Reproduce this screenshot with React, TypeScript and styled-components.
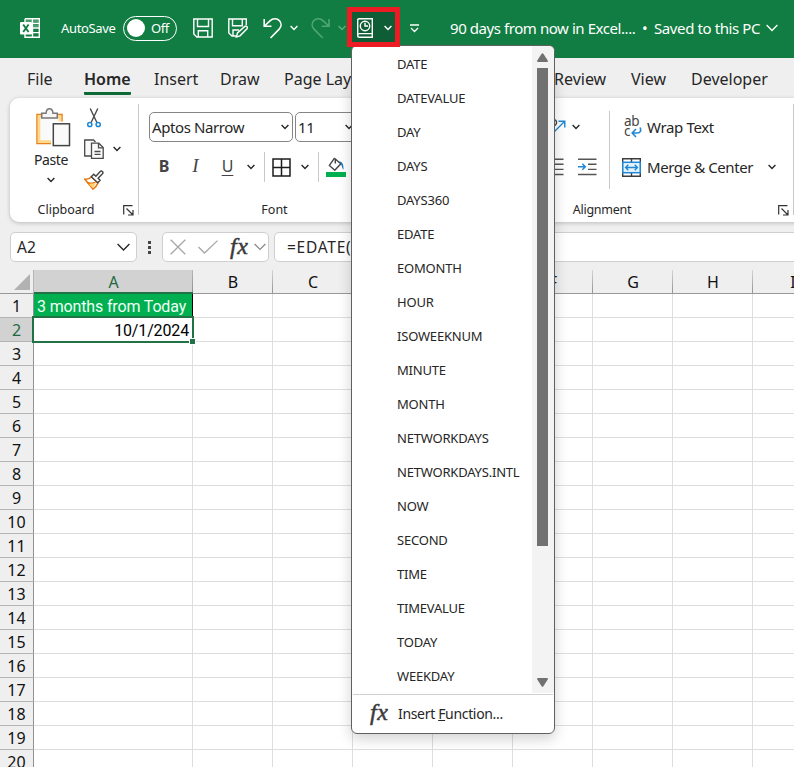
import React from 'react';
import styled, { createGlobalStyle } from 'styled-components';

const GlobalStyle = createGlobalStyle`
  *, *::before, *::after { box-sizing: border-box; }
  body { margin: 0; overflow: hidden; }
  svg { display: block; flex: none; }
`;

const Window = styled.div`
  position: relative;
  width: 794px;
  height: 767px;
  overflow: hidden;
  background: #efefef;
  color: #262626;
  font-family: 'Noto Sans', 'Open Sans', sans-serif;
`;

const Text = styled.span<{ $size?: number; $track?: number }>`
  font-size: ${(p) => p.$size ?? 15}px;
  letter-spacing: ${(p) => p.$track ?? 0}px;
  line-height: 20px;
  white-space: nowrap;
`;

/* Title bar */
const TitleBar = styled.header`
  display: grid;
  grid-template-columns: 41px 62px 70px 35px 35px 26px 22px 26px 10px 53px 50px 192px 12px 112px 14px;
  align-items: center;
  height: 58px;
  padding: 0 0 2px 20px;
  background: #117d42;
  color: #fff;
`;

const Toggle = styled.div`
  display: flex;
  align-items: center;
  gap: 6px;
  width: 54px;
  height: 25px;
  padding-left: 3px;
  border: 1px solid #fff;
  border-radius: 13px;
`;

const Knob = styled.span`
  width: 18px;
  height: 18px;
  border-radius: 50%;
  background: #fff;
`;

const HighlightedButton = styled.div`
  position: relative;
  z-index: 5;
  display: flex;
  align-items: center;
  gap: 11px;
  width: 53px;
  height: 40px;
  margin-bottom: 2px;
  padding: 2px 0 0 5px;
  border: 5px solid #ed1c24;
  background: #0f5d34;
`;

const Slot = styled.div<{ $left?: number }>`
  padding-left: ${(p) => p.$left ?? 0}px;
`;

/* Ribbon */
const Tabs = styled.nav`
  display: grid;
  grid-template-columns: 57px 70px 66px 64px 270px 77px 60px auto;
  height: 40px;
  padding-left: 27px;
`;

const Tab = styled.div<{ $active?: boolean }>`
  width: max-content;
  height: 37px;
  padding-top: 11px;
  font-size: 16px;
  line-height: 20px;
  white-space: nowrap;
  font-weight: ${(p) => (p.$active ? 600 : 400)};
  border-bottom: 3px solid ${(p) => (p.$active ? '#0e6b38' : 'transparent')};
  border-radius: 1px;
`;

const Ribbon = styled.section`
  display: flex;
  width: 800px;
  height: 124px;
  margin-left: 10px;
  border-radius: 9px;
  background: #fff;
  box-shadow: 0 1px 4px rgba(0, 0, 0, 0.22);
`;

const Group = styled.div<{ $width: number }>`
  display: flex;
  flex-direction: column;
  flex: none;
  width: ${(p) => p.$width}px;
`;

const GroupBody = styled.div`
  display: flex;
  height: 102px;
`;

const GroupLabel = styled.div<{ $shift?: number }>`
  display: grid;
  grid-template-columns: calc(50% - 30px - ${(p) => p.$shift ?? 0}px) 60px 1fr;
  justify-items: center;
  height: 20px;
`;

const Launcher = styled.div`
  justify-self: end;
  padding: 5px 4px 0 0;
`;

const GroupDivider = styled.div`
  width: 1px;
  height: 111px;
  margin-top: 6px;
  background: #c8c8c8;
`;

const PasteButton = styled.div`
  display: flex;
  flex-direction: column;
  align-items: center;
  width: 70px;
  padding: 9px 0 0 12px;
`;

const PasteCaption = styled.div`
  height: 24px;
  margin: 1px 0 5px;
`;

const PasteGlyph = styled.div`
  padding-left: 3px;
`;

const IconColumn = styled.div`
  display: flex;
  flex-direction: column;
  gap: 11px;
  padding: 10px 0 0 4px;
`;

const IconRow = styled.div`
  display: flex;
  align-items: center;
  gap: 9px;
  height: 20px;
`;

const ToolRows = styled.div<{ $left?: number; $width?: number }>`
  display: flex;
  flex-direction: column;
  gap: 10px;
  width: ${(p) => (p.$width ? `${p.$width}px` : 'auto')};
  padding: 14px 0 0 ${(p) => p.$left ?? 0}px;
`;

const ToolRow = styled.div<{ $gap?: number }>`
  display: flex;
  align-items: center;
  gap: ${(p) => p.$gap ?? 0}px;
  height: 30px;
`;

const Combo = styled.div<{ $width: number }>`
  display: flex;
  align-items: center;
  justify-content: space-between;
  width: ${(p) => p.$width}px;
  height: 30px;
  padding: 0 3px 0 2px;
  border: 1px solid #858585;
  border-radius: 5px;
  background: #fff;
`;

const FormatRow = styled.div`
  display: grid;
  grid-template-columns: 30px 33px 31px 16px 11px 23px 24px 3px 32px;
  align-items: center;
  justify-items: center;
  height: 30px;
`;

const Letter = styled.span<{ $kind: 'bold' | 'italic' | 'underline' }>`
  padding-bottom: 2px;
  font-family: ${(p) => (p.$kind === 'italic' ? "'Liberation Serif', serif" : "'Noto Sans', sans-serif")};
  font-size: ${(p) => (p.$kind === 'italic' ? 19 : 16)}px;
  line-height: 20px;
  color: #444;
  font-weight: ${(p) => (p.$kind === 'bold' ? 700 : 400)};
  font-style: ${(p) => (p.$kind === 'italic' ? 'italic' : 'normal')};
  text-decoration: ${(p) => (p.$kind === 'underline' ? 'underline' : 'none')};
  text-underline-offset: 3px;
`;

const Rule = styled.span<{ $height: number; $top?: number }>`
  width: 1px;
  height: ${(p) => p.$height}px;
  margin-top: ${(p) => p.$top ?? 0}px;
  background: #c8c8c8;
`;

/* Formula bar */
const FormulaBar = styled.section`
  display: flex;
  height: 48px;
  padding: 10px 0 8px 10px;
`;

const Field = styled.div<{ $width: number; $left?: number }>`
  display: flex;
  flex: none;
  align-items: center;
  width: ${(p) => p.$width}px;
  height: 30px;
  padding-left: ${(p) => p.$left ?? 6}px;
  border: 1px solid #cfcfcf;
  border-radius: 5px;
  background: #fff;
`;

const NameField = styled(Field)`
  justify-content: space-between;
  padding-right: 6px;
`;

const Dots = styled.div`
  display: flex;
  flex: none;
  flex-direction: column;
  align-items: center;
  gap: 2px;
  width: 25px;
  padding-top: 9px;
`;

const Dot = styled.span`
  width: 3px;
  height: 3px;
  background: #444;
`;

const Fx = styled.span<{ $left?: number }>`
  display: inline-block;
  width: 19px;
  margin-left: ${(p) => p.$left ?? 0}px;
  padding-bottom: 3px;
  color: #3b3b3b;
  font: italic 400 24px/22px 'Liberation Serif', serif;
  letter-spacing: 0.5px;
  -webkit-text-stroke: 0.5px #3b3b3b;
`;

/* Sheet */
const Sheet = styled.main`
  width: 833px;
  background: #fff;
`;

const SheetRow = styled.div<{ $head?: boolean }>`
  display: grid;
  grid-template-columns: 34px 159px repeat(8, 80px);
  height: 24px;
  background: ${(p) => (p.$head ? '#efefef' : '#fff')};
`;

const ColumnHead = styled.div<{ $selected?: boolean }>`
  display: flex;
  align-items: center;
  justify-content: center;
  padding-top: ${(p) => (p.$selected ? 2 : 1)}px;
  font-size: 16px;
  line-height: 20px;
  color: ${(p) => (p.$selected ? '#1d6a41' : '#111')};
  background: ${(p) =>
    p.$selected
      ? 'linear-gradient(#b8b8b8, #8f8f8f) right / 1px 100% no-repeat, #d2d2d2'
      : 'linear-gradient(#d4d4d4, #939393) right / 1px 100% no-repeat'};
  border-bottom: ${(p) => (p.$selected ? '2px solid #217346' : '1px solid #999')};
`;

const Corner = styled.div`
  display: flex;
  justify-content: flex-end;
  padding: 4px 3px 0 0;
  border-right: 1px solid #b5b5b5;
  border-bottom: 1px solid #999;
`;

const RowHead = styled.div<{ $selected?: boolean }>`
  display: flex;
  align-items: center;
  justify-content: center;
  font-size: 16px;
  line-height: 20px;
  color: ${(p) => (p.$selected ? '#1d6a41' : '#111')};
  background: ${(p) => (p.$selected ? '#d2d2d2' : '#efefef')};
  border-right: 1px solid #939393;
  border-bottom: 1px solid #b4b4b4;
`;

const Cell = styled.div<{ $fill?: boolean; $right?: boolean }>`
  position: relative;
  display: flex;
  align-items: center;
  justify-content: ${(p) => (p.$right ? 'flex-end' : 'flex-start')};
  padding: 2px 3px 0;
  font-family: Roboto, sans-serif;
  font-size: 16px;
  letter-spacing: -0.15px;
  white-space: nowrap;
  color: ${(p) => (p.$fill ? '#f2fff7' : '#000')};
  background: ${(p) => (p.$fill ? '#00b050' : 'transparent')};
  border-right: 1px solid ${(p) => (p.$fill ? '#000' : '#dedede')};
  border-bottom: 1px solid #dedede;
`;

const Selection = styled.span`
  position: absolute;
  inset: -2px -2px -2px -2px;
  border: 2px solid #217346;
`;

const FillHandle = styled.span`
  position: absolute;
  z-index: 1;
  right: -3px;
  bottom: -3px;
  width: 5px;
  height: 5px;
  background: #217346;
  box-shadow: 0 0 0 1px #fff;
`;

/* Function menu */
const Menu = styled.aside`
  position: absolute;
  z-index: 2;
  left: 351px;
  top: 45px;
  width: 204px;
  height: 689px;
  border: 1px solid #606060;
  border-radius: 6px;
  background: #fff;
  overflow: hidden;
`;

const MenuShadow = styled.div`
  position: absolute;
  z-index: 1;
  left: 351px;
  top: 72px;
  width: 204px;
  height: 662px;
  border-radius: 6px;
  box-shadow: 0 5px 14px rgba(0, 0, 0, 0.18);
`;

const MenuMain = styled.div`
  display: flex;
  height: 647px;
`;

const MenuList = styled.div`
  flex: 1;
  padding: 1px 0 0 45px;
`;

const MenuItem = styled.div`
  height: 34px;
  font-size: 13px;
  line-height: 34px;
  letter-spacing: -0.2px;
  white-space: nowrap;
`;

const ScrollTrack = styled.div`
  display: flex;
  flex-direction: column;
  align-items: center;
  width: 22px;
  padding: 7px 1px 6px 0;
  background: #f3f3f3;
`;

const ScrollThumb = styled.div`
  width: 11px;
  height: 478px;
  margin: 6px 0 auto;
  background: #717171;
`;

const MenuFooter = styled.div`
  display: flex;
  align-items: center;
  height: 38px;
  margin: 1px 1px 0;
  border-top: 1px solid #cfcfcf;
`;

const FooterText = styled.span`
  margin-left: 9px;
  font-size: 14px;
  letter-spacing: -0.33px;
  white-space: nowrap;
`;

const Chevron = ({ w = 8, color = 'currentColor', sw = 1.4 }: { w?: number; color?: string; sw?: number }) => (
  <svg width={w} height={w / 2 + 2} viewBox={`0 0 ${w} ${w / 2 + 2}`} fill="none" stroke={color} strokeWidth={sw}>
    <path d={`M.6 1 L${w / 2} ${w / 2 + 0.4} L${w - 0.6} 1`} />
  </svg>
);

const ExcelLogo = () => (
  <svg width="20" height="20" viewBox="0 0 20 20">
    <path d="M5 .7h14.3v18.6H5V15M5 5V.7M12.5 .7v18.6M5 5.4h14.3M12 10h7.3M5 14.6h14.3" fill="none" stroke="#fff" strokeWidth="1.4" />
    <path d="M6 1.5h6v2.8H6zM13.5 1.5h5v3h-5zM13.5 6.3h5v2.8h-5z" fill="#fff" opacity=".25" />
    <rect x="0" y="4" width="12" height="12.5" rx="1" fill="#fff" />
    <path d="M3.2 6.5l5.4 7.5M8.6 6.5L3.2 14" stroke="#117d42" strokeWidth="1.9" fill="none" />
  </svg>
);

const SaveIcon = ({ pen }: { pen?: boolean }) => (
  <svg width="20" height="20" viewBox="0 0 20 20" fill="none" stroke="#fff" strokeWidth="1.4">
    {pen ? (
      <>
        <path d="M8 18H4L.8 15V1h17.5v6M4.5 1v6.7h9.8V1M5 17.8V12h6" />
        <path d="M8.3 19l1.2-4 7.3-6.6c1.4-1 3.3.8 2.2 2.3L12 17.8z" />
      </>
    ) : (
      <path d="M.8 1h18.4v18H3.8L.8 16zM4.5 1v7.5h11V1M5.3 19v-6.3h9.4V19" />
    )}
  </svg>
);

const UndoIcon = () => (
  <svg width="20" height="21" viewBox="0 0 20 21" fill="none" stroke="#fff" strokeWidth="1.6">
    <path d="M1.2 1v7.3h7.3M1.5 8L7 2.8C10-.1 14.4.4 16.5 2.8c2.2 2.6 2 6-.3 8.3L7.5 20" />
  </svg>
);

const RedoIcon = () => (
  <svg width="20" height="21" viewBox="0 0 20 21" fill="none" stroke="#4fa773" strokeWidth="1.6">
    <path d="M18 1v7.3h-7.3M17.700 8L12.2 2.8C9.2-.1 5 .4 2.7 2.800c-2.2 2.6-2 6 .3 8.300L11.7 20" />
  </svg>
);

const DateBookIcon = () => (
  <svg width="16" height="20" viewBox="0 0 16 20" fill="none" stroke="#fff" strokeWidth="1.4">
    <path d="M15.3 15.3V.7H2.2Q.7.7.7 2.2V17.5Q.7 19.3 2.5 19.3H15.3V15.6H2.5Q.7 15.8.7 17.5" />
    <circle cx="8" cy="8" r="4.7" />
    <path d="M8 4.8V8h3" />
  </svg>
);

const CustomizeIcon = () => (
  <svg width="9" height="9" viewBox="0 0 9 9" fill="none" stroke="#fff" strokeWidth="1.3">
    <path d="M0 1h9M1 4l3.5 3.5L8 4" />
  </svg>
);

const PasteIcon = () => (
  <svg width="36" height="40" viewBox="0 0 36 40" fill="none">
    <rect x="2" y="7.5" width="25" height="29" fill="#fafafa" stroke="#e8811a" strokeWidth="1.5" />
    <rect x="4" y="9.5" width="21" height="25" stroke="#ffd987" strokeWidth="2.6" />
    <path d="M6.7 11V6.2h4.3C11.3 3 12.6 1.8 14.5 1.8S17.7 3 18 6.2h4.3V11z" fill="#f6f6f6" stroke="#777" strokeWidth="1.5" />
    <rect x="16" y="14.5" width="20" height="25" fill="#fff" />
    <rect x="18.3" y="16.8" width="16.2" height="21.8" fill="#fafafa" stroke="#444" strokeWidth="1.5" />
  </svg>
);

const ScissorsIcon = () => (
  <svg width="20" height="20" viewBox="0 0 20 20" fill="none">
    <path d="M6.2.5l6.8 14.3M13.8.5L7 14.8" stroke="#4a4a4a" strokeWidth="1.4" />
    <circle cx="5.8" cy="16.5" r="2.1" stroke="#1e88d6" strokeWidth="1.5" />
    <circle cx="14.2" cy="16.5" r="2.1" stroke="#1e88d6" strokeWidth="1.5" />
  </svg>
);

const CopyIcon = () => (
  <svg width="20" height="20" viewBox="0 0 20 20" fill="#fafafa" stroke="#4a4a4a" strokeWidth="1.3">
    <path d="M7 17H.7V1h8.8l2 2" />
    <path d="M7.5 4.2h7.3l4.4 4.3v10.8H7.5z" />
    <path d="M14.5 4.5v4.3h4.5M10.5 12.5h6M10.5 15.3h6" fill="none" />
  </svg>
);

const PainterIcon = () => (
  <svg width="20" height="20" viewBox="0 0 20 20" fill="none">
    <path d="M.8 9.200c3 .3 5-.5 6.700-2.500l6.500 6.200c-1.200 3-3 5-5 6.200z" fill="#fff" stroke="#e8760c" strokeWidth="1.5" />
    <path d="M5 14.500l7-1.500-3.200 5z" fill="#ffd36b" />
    <path d="M3 12.500c3 .8 5.500.8 8.500-.2" stroke="#e8760c" strokeWidth="1.3" />
    <path d="M7.300 6.700L9.700 4.300l2.200 2 4.300-4.700c1.400-1.400 3.600.6 2.300 2.100l-4.400 4.500 2 2.100-2.400 2.500z" fill="#fff" stroke="#444" strokeWidth="1.4" />
  </svg>
);

const BordersIcon = () => (
  <svg width="19" height="19" viewBox="0 0 19 19" fill="none" stroke="#1c1c1c" strokeWidth="1.5">
    <path d="M1 1h17v17H1zM9.500 1v17M1 9.500h17" />
  </svg>
);

const FillIcon = () => (
  <svg width="20" height="20" viewBox="0 0 20 20" fill="none">
    <path d="M8.500 1.200L3.400 8.400l5.400 4.800 6-6.400L9.300 2v4.500" stroke="#444" strokeWidth="1.4" />
    <path d="M13 4.500c3 0 4.800 2.500 4.500 8.300-1.300-1-1.500-3.800-2.700-6z" fill="#1875bd" />
    <rect x="0" y="15" width="20" height="5" fill="#00b050" />
  </svg>
);

const LauncherIcon = () => (
  <svg width="11" height="11" viewBox="0 0 11 11" fill="none" stroke="#333" strokeWidth="1.2">
    <path d="M.7 9.500V.7h8.800M3.500 3.500l6 6M10 5v5H5" />
  </svg>
);

const OrientationIcon = () => (
  <svg width="26" height="20" viewBox="0 0 26 20" fill="none">
    <path d="M4 8l3 7M11 3c5-2 6 4 2 6" stroke="#444" strokeWidth="1.4" />
    <path d="M11 17L23.500 4.500M17.500 4.200h6.300V10.500" stroke="#1e88d6" strokeWidth="1.4" />
  </svg>
);

const IndentIcon = ({ out }: { out?: boolean }) => (
  <svg width="19" height="18" viewBox="0 0 19 18" fill="none">
    <path d="M0 1.200h18.500M10 6.200h8.500M10 11.400h8.500M0 16.500h18.500" stroke="#555" strokeWidth="1.4" />
    <path d={out ? 'M8 8.800H1M4 5.800l-3 3 3 3' : 'M0 8.800h7M4.300 5.800l3 3-3 3'} stroke="#1e88d6" strokeWidth="1.5" />
  </svg>
);

const WrapGlyph = styled.div`
  display: grid;
  grid-template-columns: 7px 12px;
  grid-template-rows: 10px 10px;
  width: 25px;
  padding: 0 0 3px 2px;
  color: #444;
  font-size: 13.5px;
  line-height: 10px;
`;

const WrapLetters = styled.span`
  grid-column: 1 / 3;
  letter-spacing: -0.2px;
`;

const WrapArrow = styled.div`
  padding-top: 1px;
`;

const WrapIcon = () => (
  <WrapGlyph>
    <WrapLetters>ab</WrapLetters>
    <span>c</span>
    <WrapArrow>
      <svg width="11" height="11" viewBox="0 0 11 11" fill="none" stroke="#1e88d6" strokeWidth="1.6">
        <path d="M9 .5c1.500 3 .5 5.500-3 5.500H1.500M5 2L1.200 6 5 10" />
      </svg>
    </WrapArrow>
  </WrapGlyph>
);

const MergeIcon = () => (
  <svg width="19" height="19" viewBox="0 0 19 19" fill="none">
    <path d="M.7.7h17.600v17.600H.7zM9.500.7v4M9.500 15v3.500" stroke="#3c3c3c" strokeWidth="1.4" />
    <rect x=".8" y="4.300" width="17.400" height="10.400" fill="#e7f3fb" stroke="#1e88d6" strokeWidth="1.5" />
    <path d="M4 9.500h11M6.300 6.800L3.600 9.500l2.700 2.700M12.700 6.800l2.700 2.700-2.700 2.700" stroke="#1e88d6" strokeWidth="1.4" />
  </svg>
);

const CrossIcon = () => (
  <svg width="16" height="16" viewBox="0 0 16 16" fill="none" stroke="#a6a6a6" strokeWidth="1.3">
    <path d="M.7.7l14.600 14.600M15.300.7L.7 15.300" />
  </svg>
);

const CheckIcon = () => (
  <svg width="20" height="14" viewBox="0 0 20 14" fill="none" stroke="#a6a6a6" strokeWidth="1.3">
    <path d="M.5 7l6 6L19.500.6" />
  </svg>
);

const ScrollArrow = ({ down }: { down?: boolean }) => (
  <svg width="11" height="9" viewBox="0 0 11 9" fill="#717171">
    <path d={down ? 'M1 0h9q1.500.3.700 1.600L6.400 8.300q-.9 1-1.800 0L.3 1.600Q-.5.3 1 0z' : 'M1 9h9q1.500-.3.700-1.600L6.400.7q-.9-1-1.800 0L.3 7.400Q-.5 8.700 1 9z'} />
  </svg>
);

const functions = [
  'DATE', 'DATEVALUE', 'DAY', 'DAYS', 'DAYS360', 'EDATE', 'EOMONTH', 'HOUR', 'ISOWEEKNUM', 'MINUTE',
  'MONTH', 'NETWORKDAYS', 'NETWORKDAYS.INTL', 'NOW', 'SECOND', 'TIME', 'TIMEVALUE', 'TODAY', 'WEEKDAY',
];
const tabs = ['File', 'Home', 'Insert', 'Draw', 'Page Layout', 'Review', 'View', 'Developer'];
const columns = ['A', 'B', 'C', 'D', 'E', 'F', 'G', 'H', 'I'];
const rows = Array.from({ length: 20 }, (_, i) => i + 1);

export default function App() {
  return (
    <Window>
      <GlobalStyle />
      <TitleBar>
        <ExcelLogo />
        <Text $size={13} $track={-0.35}>AutoSave</Text>
        <Toggle>
          <Knob />
          <Text $size={13} $track={-0.5}>Off</Text>
        </Toggle>
        <SaveIcon />
        <SaveIcon pen />
        <UndoIcon />
        <Slot $left={1}><Chevron /></Slot>
        <RedoIcon />
        <Slot $left={1}><Chevron color="#5fae80" /></Slot>
        <HighlightedButton>
          <DateBookIcon />
          <Chevron />
        </HighlightedButton>
        <Slot $left={10}><CustomizeIcon /></Slot>
        <Text $track={-0.43}>90 days from now in Excel....</Text>
        <Text>•</Text>
        <Text $track={-0.4}>Saved to this PC</Text>
        <Chevron w={12} />
      </TitleBar>

      <Tabs>
        {tabs.map((tab) => (
          <Tab key={tab} $active={tab === 'Home'}>{tab}</Tab>
        ))}
      </Tabs>

      <Ribbon>
        <Group $width={128}>
          <GroupBody>
            <PasteButton>
              <PasteGlyph><PasteIcon /></PasteGlyph>
              <PasteCaption><Text $size={14} $track={-0.35}>Paste</Text></PasteCaption>
              <Chevron />
            </PasteButton>
            <IconColumn>
              <IconRow><ScissorsIcon /></IconRow>
              <IconRow><CopyIcon /><Chevron /></IconRow>
              <IconRow><PainterIcon /></IconRow>
            </IconColumn>
          </GroupBody>
          <GroupLabel $shift={8}>
            <span />
            <Text $size={12.5}>Clipboard</Text>
            <Launcher><LauncherIcon /></Launcher>
          </GroupLabel>
        </Group>
        <GroupDivider />

        <Group $width={271}>
          <GroupBody>
            <ToolRows $left={10}>
              <ToolRow $gap={2}>
                <Combo $width={144}><Text $track={-0.4}>Aptos Narrow</Text><Chevron /></Combo>
                <Combo $width={62}><Text $track={-0.4}>11</Text><Chevron /></Combo>
              </ToolRow>
              <FormatRow>
                <Letter $kind="bold">B</Letter>
                <Letter $kind="italic">I</Letter>
                <Letter $kind="underline">U</Letter>
                <Chevron />
                <Rule $height={30} />
                <BordersIcon />
                <Chevron />
                <Rule $height={30} />
                <FillIcon />
              </FormatRow>
            </ToolRows>
          </GroupBody>
          <GroupLabel>
            <span />
            <Text $size={12.5}>Font</Text>
            <span />
          </GroupLabel>
        </Group>
        <GroupDivider />

        <Group $width={382}>
          <GroupBody>
            <ToolRows $left={130} $width={198}>
              <ToolRow $gap={5}><OrientationIcon /><Chevron /></ToolRow>
              <ToolRow $gap={14}><Slot $left={4}><IndentIcon out /></Slot><IndentIcon /></ToolRow>
            </ToolRows>
            <Rule $height={78} $top={13} />
            <ToolRows $left={12}>
              <ToolRow>
                <WrapIcon />
                <Text $track={-0.35}>Wrap Text</Text>
              </ToolRow>
              <ToolRow $gap={6}>
                <MergeIcon />
                <Text $track={-0.42}>Merge &amp; Center</Text>
                <Slot $left={9}><Chevron /></Slot>
              </ToolRow>
            </ToolRows>
          </GroupBody>
          <GroupLabel>
            <span />
            <Text $size={12.5} $track={-0.25}>Alignment</Text>
            <Launcher><LauncherIcon /></Launcher>
          </GroupLabel>
        </Group>
        <GroupDivider />
      </Ribbon>

      <FormulaBar>
        <NameField $width={127}><Text $size={15.5}>A2</Text><Chevron w={13} /></NameField>
        <Dots><Dot /><Dot /><Dot /></Dots>
        <Field $width={107} $left={7}>
          <CrossIcon />
          <Slot $left={12}><CheckIcon /></Slot>
          <Fx $left={12}>fx</Fx>
          <Slot $left={5}><Chevron w={12} color="#8a8a8a" sw={1.3} /></Slot>
        </Field>
        <Slot $left={5}>
          <Field $width={540} $left={12}><Text $size={15.5} $track={0.75}>=EDATE(</Text></Field>
        </Slot>
      </FormulaBar>

      <Sheet>
        <SheetRow $head>
          <Corner>
            <svg width="16" height="16" viewBox="0 0 16 16" fill="#b2b2b2"><path d="M16 0v16H0z" /></svg>
          </Corner>
          {columns.map((c) => (
            <ColumnHead key={c} $selected={c === 'A'}>{c}</ColumnHead>
          ))}
        </SheetRow>
        {rows.map((r) => (
          <SheetRow key={r}>
            <RowHead $selected={r === 2}>{r}</RowHead>
            {columns.map((c) => {
              if (c === 'A' && r === 1) return <Cell key={c} $fill>3 months from Today</Cell>;
              if (c === 'A' && r === 2)
                return (
                  <Cell key={c} $right>
                    10/1/2024
                    <Selection />
                    <FillHandle />
                  </Cell>
                );
              return <Cell key={c} />;
            })}
          </SheetRow>
        ))}
      </Sheet>

      <MenuShadow />
      <Menu>
        <MenuMain>
          <MenuList>
            {functions.map((f) => (
              <MenuItem key={f}>{f}</MenuItem>
            ))}
          </MenuList>
          <ScrollTrack>
            <ScrollArrow />
            <ScrollThumb />
            <ScrollArrow down />
          </ScrollTrack>
        </MenuMain>
        <MenuFooter>
          <Fx $left={17}>fx</Fx>
          <FooterText>Insert <u>F</u>unction...</FooterText>
        </MenuFooter>
      </Menu>
    </Window>
  );
}
